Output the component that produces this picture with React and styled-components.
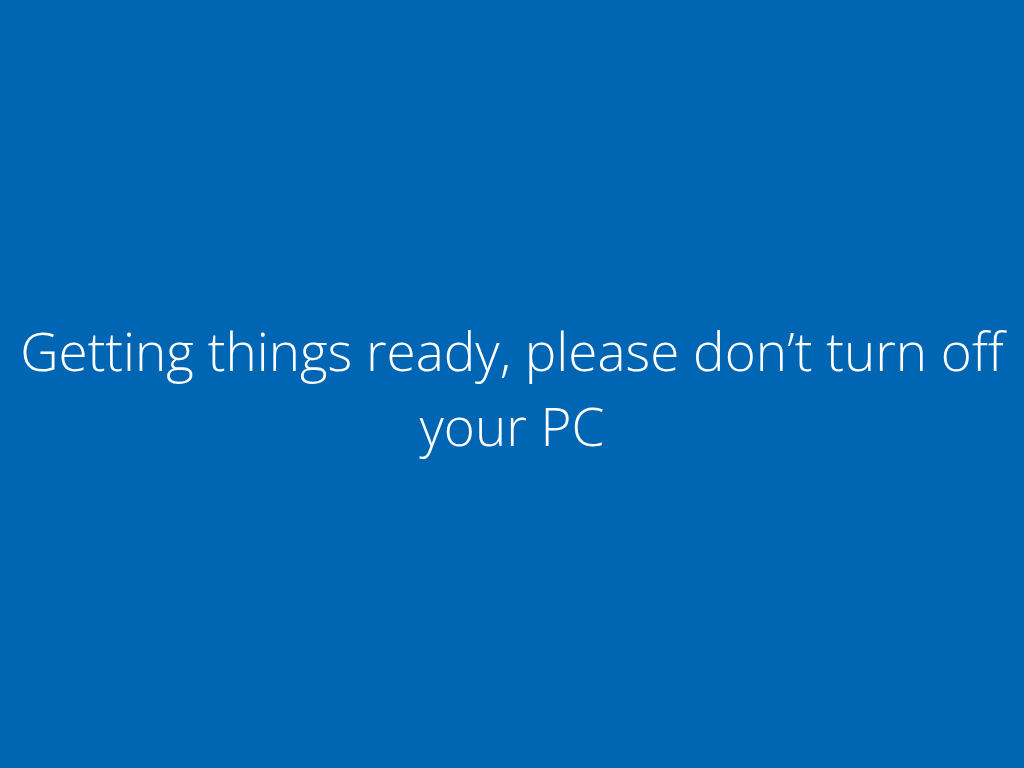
import React from 'react'
import styled, { createGlobalStyle } from 'styled-components'

const GlobalStyle = createGlobalStyle`
  html, body {
    margin: 0;
    padding: 0;
    background: #0065b3;
  }
`

const Screen = styled.div`
  width: 100vw;
  height: 100vh;
  background: #0065b3;
  display: flex;
  align-items: center;
  justify-content: center;
  padding-top: 8px;
  box-sizing: border-box;
  overflow: hidden;
`

const Message = styled.h1`
  margin: 0;
  color: #ffffff;
  font-family: "Segoe UI Light", "Open Sans", "Noto Sans", sans-serif;
  font-weight: 300;
  font-size: 53px;
  line-height: 75px;
  text-align: center;
  white-space: nowrap;
`

const App = () => {
  return (
    <Screen>
      <GlobalStyle />
      <Message>
        Getting things ready, please don’t turn off
        <br />
        your PC
      </Message>
    </Screen>
  )
}

export default App
